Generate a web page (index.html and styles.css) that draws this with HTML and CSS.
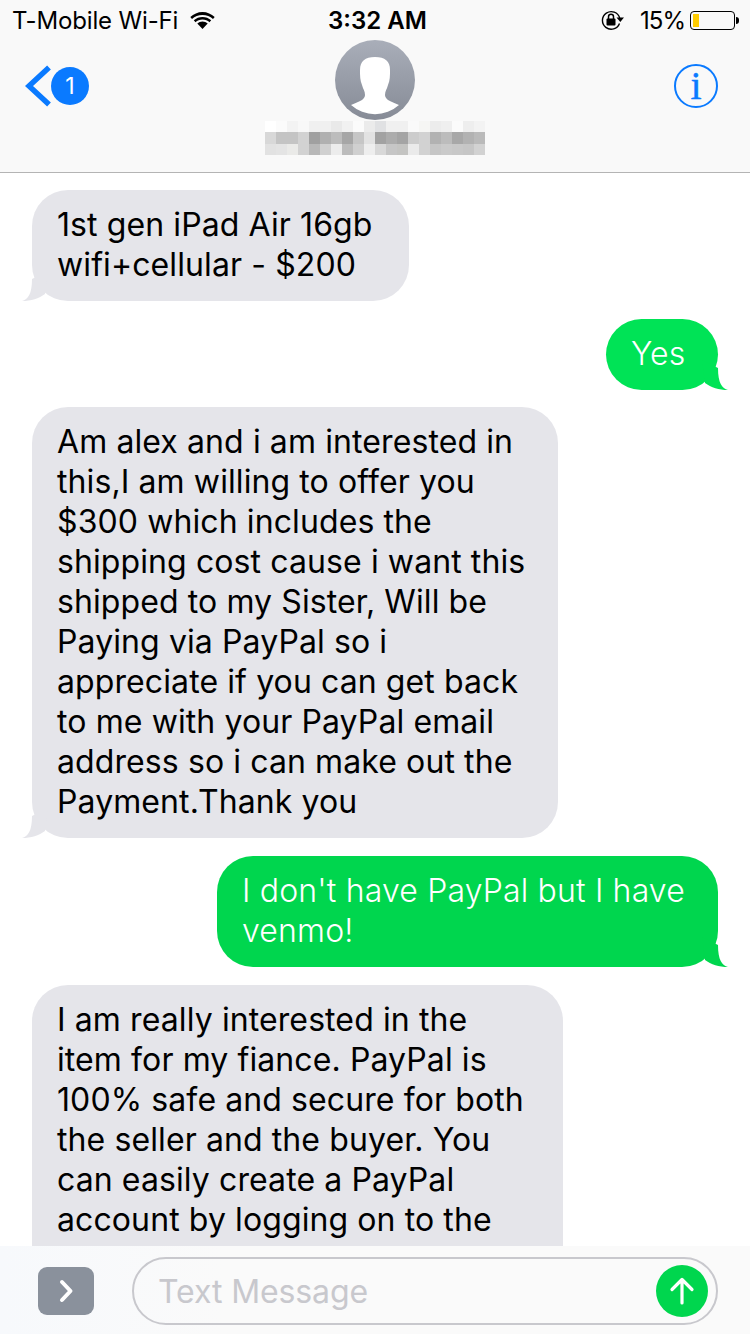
FILE: index.html
```html
<!DOCTYPE html>
<html lang="en">
<head>
  <meta charset="UTF-8">
  <meta name="viewport" content="width=device-width, initial-scale=1.0">
  <title>Messages</title>
  <link rel="stylesheet" href="styles.css">
</head>
<body>
  <div class="phone">
    <header class="top-bar">
      <div class="status-bar">
        <div class="status-left">
          <span class="carrier">T-Mobile Wi-Fi</span>
          <svg class="wifi" width="25" height="18" viewBox="0 0 25 18">
            <path d="M12.500 4C8.400 4 4.800 5.500 2 8L0.300 6C3.600 3 7.800 1 12.500 1S21.400 3 24.700 6L23 8C20.200 5.500 16.600 4 12.500 4Z"/>
            <path d="M12.500 8.500C9.800 8.500 7.400 9.500 5.500 11.200L3.800 9.300C6.200 7.200 9.200 6 12.500 6S18.800 7.200 21.200 9.300L19.500 11.200C17.600 9.500 15.200 8.500 12.500 8.500Z"/>
            <path d="M12.500 10.500C14.500 10.500 16.300 11.300 17.700 12.500L12.500 18L7.300 12.500C8.700 11.300 10.500 10.500 12.500 10.500Z"/>
          </svg>
        </div>
        <div class="status-time">3:32 AM</div>
        <div class="status-right">
          <svg class="lock" width="24" height="20" viewBox="0 0 24 20">
            <path d="M18.500 13.500A8.800 8.800 0 1 1 18.700 8" fill="none" stroke="#000" stroke-width="1.400"/>
            <path d="M15.500 7.500H23L19.300 12Z"/>
            <rect x="5.500" y="8.500" width="9" height="7" rx="1"/>
            <path d="M7.500 9V6.800a2.500 2.500 0 0 1 5 0V9" fill="none" stroke="#000" stroke-width="1.500"/>
          </svg>
          <span class="percent">15%</span>
          <div class="battery">
            <div class="battery-shell"><div class="battery-level"></div></div>
            <div class="battery-nub"></div>
          </div>
        </div>
      </div>
      <nav class="nav-bar">
        <div class="nav-back">
          <svg width="26" height="42" viewBox="0 0 26 42">
            <path d="M24 2.500L4 21L24 39.500" fill="none" stroke="#0a7aff" stroke-width="5.500"/>
          </svg>
          <span class="badge">1</span>
        </div>
        <div class="contact">
          <div class="avatar">
            <svg width="80" height="80" viewBox="0 0 80 80">
              <path d="M40 17C30 17 25 21 25 30C25 36 25 40 27 45C28 49 30 51 30 55C30 57 29 58 27 60C24 62 20 63 16 65A36 36 0 0 0 64 65C60 63 56 62 53 60C51 58 50 57 50 55C50 51 52 49 53 45C55 40 55 36 55 30C55 21 50 17 40 17Z" fill="#fff"/>
            </svg>
          </div>
          <svg class="name-blur" width="220" height="34" viewBox="0 0 20 3" preserveAspectRatio="none" shape-rendering="crispEdges">
            <g>
              <rect x="0" y="0" width="1" height="1" fill="#ffffff"/><rect x="1" y="0" width="1" height="1" fill="#fbfbfb"/><rect x="2" y="0" width="1" height="1" fill="#f3f3f3"/><rect x="3" y="0" width="1" height="1" fill="#f8f8f8"/><rect x="4" y="0" width="1" height="1" fill="#f0f0f0"/><rect x="5" y="0" width="1" height="1" fill="#f0f0f0"/><rect x="6" y="0" width="1" height="1" fill="#e9e9e9"/><rect x="7" y="0" width="1" height="1" fill="#f1f1f1"/><rect x="8" y="0" width="1" height="1" fill="#fbfbfb"/><rect x="9" y="0" width="1" height="1" fill="#ebebeb"/><rect x="10" y="0" width="1" height="1" fill="#e0e1e3"/><rect x="11" y="0" width="1" height="1" fill="#f0f0f0"/><rect x="12" y="0" width="1" height="1" fill="#f0f0f0"/><rect x="13" y="0" width="1" height="1" fill="#fafafa"/><rect x="14" y="0" width="1" height="1" fill="#f6f6f4"/><rect x="15" y="0" width="1" height="1" fill="#ececec"/><rect x="16" y="0" width="1" height="1" fill="#efefef"/><rect x="17" y="0" width="1" height="1" fill="#fbfbfb"/><rect x="18" y="0" width="1" height="1" fill="#eeeeee"/><rect x="19" y="0" width="1" height="1" fill="#f3f3f3"/>
            </g>
            <g>
              <rect x="0" y="1" width="1" height="1" fill="#d8d8d8"/><rect x="1" y="1" width="1" height="1" fill="#c4c4c4"/><rect x="2" y="1" width="1" height="1" fill="#c4c4c4"/><rect x="3" y="1" width="1" height="1" fill="#d2d2d2"/><rect x="4" y="1" width="1" height="1" fill="#a0a0a0"/><rect x="5" y="1" width="1" height="1" fill="#b0b0b0"/><rect x="6" y="1" width="1" height="1" fill="#bcbcbc"/><rect x="7" y="1" width="1" height="1" fill="#a6a6a6"/><rect x="8" y="1" width="1" height="1" fill="#c6c6c6"/><rect x="9" y="1" width="1" height="1" fill="#e2e2e2"/><rect x="10" y="1" width="1" height="1" fill="#a2a2a2"/><rect x="11" y="1" width="1" height="1" fill="#acacac"/><rect x="12" y="1" width="1" height="1" fill="#a4a4a4"/><rect x="13" y="1" width="1" height="1" fill="#cccccc"/><rect x="14" y="1" width="1" height="1" fill="#d2d2d2"/><rect x="15" y="1" width="1" height="1" fill="#b2b2b2"/><rect x="16" y="1" width="1" height="1" fill="#bcbcbc"/><rect x="17" y="1" width="1" height="1" fill="#a8a8a8"/><rect x="18" y="1" width="1" height="1" fill="#b2b2b2"/><rect x="19" y="1" width="1" height="1" fill="#bababa"/>
            </g>
            <g>
              <rect x="0" y="2" width="1" height="1" fill="#e2e2e2"/><rect x="1" y="2" width="1" height="1" fill="#e4e4e4"/><rect x="2" y="2" width="1" height="1" fill="#eaeae8"/><rect x="3" y="2" width="1" height="1" fill="#d2d2d2"/><rect x="4" y="2" width="1" height="1" fill="#b8b8b8"/><rect x="5" y="2" width="1" height="1" fill="#d0d0d0"/><rect x="6" y="2" width="1" height="1" fill="#ececec"/><rect x="7" y="2" width="1" height="1" fill="#bcbcbc"/><rect x="8" y="2" width="1" height="1" fill="#d0d0d0"/><rect x="9" y="2" width="1" height="1" fill="#eeeeee"/><rect x="10" y="2" width="1" height="1" fill="#d8d8d8"/><rect x="11" y="2" width="1" height="1" fill="#c6c6c6"/><rect x="12" y="2" width="1" height="1" fill="#c4c4c2"/><rect x="13" y="2" width="1" height="1" fill="#eaeaea"/><rect x="14" y="2" width="1" height="1" fill="#d2d2d2"/><rect x="15" y="2" width="1" height="1" fill="#c6c6c6"/><rect x="16" y="2" width="1" height="1" fill="#cacaca"/><rect x="17" y="2" width="1" height="1" fill="#c8c8c8"/><rect x="18" y="2" width="1" height="1" fill="#c6c6c6"/><rect x="19" y="2" width="1" height="1" fill="#d2d2d2"/>
            </g>
          </svg>
        </div>
        <div class="nav-info"><span class="info-i">i</span></div>
      </nav>
    </header>

    <main class="thread">
      <div class="bubble in msg-ipad">
        1st gen iPad Air 16gb<br>wifi+cellular - $200
        <svg class="tail" width="30" height="30" viewBox="0 0 30 30"><path d="M0 30C6 28.500 10 23 10 8L26 0L23 23C17 27.500 9 30 0 30Z"/></svg>
      </div>
      <div class="bubble out bright msg-yes">
        Yes
        <svg class="tail" width="30" height="30" viewBox="0 0 30 30"><path d="M0 30C6 28.500 10 23 10 8L26 0L23 23C17 27.500 9 30 0 30Z"/></svg>
      </div>
      <div class="bubble in msg-offer">
        Am alex and i am interested in<br>this,I am willing to offer you<br>$300 which includes the<br>shipping cost cause i want this<br>shipped to my Sister, Will be<br>Paying via PayPal so i<br>appreciate if you can get back<br>to me with your PayPal email<br>address so i can make out the<br>Payment.Thank you
        <svg class="tail" width="30" height="30" viewBox="0 0 30 30"><path d="M0 30C6 28.500 10 23 10 8L26 0L23 23C17 27.500 9 30 0 30Z"/></svg>
      </div>
      <div class="bubble out msg-venmo">
        I don't have PayPal but I have<br>venmo!
        <svg class="tail" width="30" height="30" viewBox="0 0 30 30"><path d="M0 30C6 28.500 10 23 10 8L26 0L23 23C17 27.500 9 30 0 30Z"/></svg>
      </div>
      <div class="bubble in msg-fiance">
        I am really interested in the<br>item for my fiance. PayPal is<br>100% safe and secure for both<br>the seller and the buyer. You<br>can easily create a PayPal<br>account by logging on to the
      </div>
    </main>

    <footer class="composer">
      <div class="expand">
        <svg width="16" height="24" viewBox="0 0 16 24"><path d="M4 3L12.500 12L4 21" fill="none" stroke="#fff" stroke-width="4" stroke-linecap="round" stroke-linejoin="round"/></svg>
      </div>
      <div class="input">
        <span class="placeholder">Text Message</span>
        <div class="send">
          <svg width="30" height="30" viewBox="0 0 30 30"><path d="M15 27V4M5 13.500L15 3.500L25 13.500" fill="none" stroke="#fff" stroke-width="3.200" stroke-linecap="round" stroke-linejoin="round"/></svg>
        </div>
      </div>
    </footer>
  </div>
</body>
</html>
```

FILE: styles.css
```css
html, body {
  margin: 0;
  overflow: hidden;
}
body {
  background-color: #fff;
  color: #000;
  font-family: Inter, "Liberation Sans", sans-serif;
}
.phone {
  width: 750px;
  height: 1334px;
  display: flex;
  flex-direction: column;
  overflow: hidden;
}

/* top */
.top-bar {
  background-color: #f9f9f9;
  border-bottom: 1px solid #b4b4b4;
  flex: none;
  height: 172px;
}
.status-bar {
  height: 40px;
  display: grid;
  grid-template-columns: 1fr auto 1fr;
  align-items: center;
  padding: 0 11px 0 12px;
  font-size: 24px;
}
.status-left {
  display: flex;
  align-items: center;
  gap: 12px;
}
.carrier {
  letter-spacing: -0.15px;
}
.status-time {
  font-weight: 600;
  transform: translateX(2px);
}
.status-right {
  display: flex;
  align-items: center;
  justify-content: flex-end;
}
.lock {
  margin-right: 15px;
}
.percent {
  margin-right: 5px;
  letter-spacing: -1px;
}
.battery {
  display: flex;
  align-items: center;
}
.battery-shell {
  width: 45px;
  height: 19px;
  box-sizing: border-box;
  border: 1.5px solid #000;
  border-radius: 4px;
  padding: 2px;
}
.battery-level {
  width: 6px;
  height: 100%;
  background-color: #ffcc00;
}
.battery-nub {
  width: 3px;
  height: 7px;
  background-color: #000;
  border-radius: 0 3px 3px 0;
  margin-left: 1px;
}

.nav-bar {
  display: grid;
  grid-template-columns: 1fr auto 1fr;
  padding: 0 25px;
}
.nav-back {
  display: flex;
  align-items: center;
  align-self: start;
  margin-top: 25px;
}
.badge {
  width: 38px;
  height: 38px;
  border-radius: 50%;
  background-color: #0a7aff;
  color: #fff;
  font-size: 23px;
  display: flex;
  align-items: center;
  justify-content: center;
}
.contact {
  display: flex;
  flex-direction: column;
  align-items: center;
}
.avatar {
  width: 80px;
  height: 80px;
  border-radius: 50%;
  overflow: hidden;
  background: linear-gradient(to bottom, #a9aeb9, #868b96);
}
.avatar svg {
  display: block;
}
.name-blur {
  display: block;
  margin-top: 1px;
}
.nav-info {
  justify-self: end;
  align-self: start;
  margin: 24px 7px 0 0;
  width: 44px;
  height: 44px;
  box-sizing: border-box;
  border: 2px solid #0a7aff;
  border-radius: 50%;
  display: flex;
  align-items: center;
  justify-content: center;
}
.info-i {
  font-family: "Liberation Serif", serif;
  font-size: 40px;
  line-height: 1;
  color: #0a7aff;
  -webkit-text-stroke: 0.4px #0a7aff;
}

/* messages */
.thread {
  flex: 1;
  min-height: 0;
  display: flex;
  flex-direction: column;
  align-items: flex-start;
  gap: 18.4px;
  padding: 17px 32px 0;
  overflow: hidden;
}
.bubble {
  position: relative;
  flex: none;
  box-sizing: border-box;
  font-size: 32px;
  line-height: 40px;
  padding: 15px 25px 15.6px;
  border-radius: 36px;
}
.bubble.in {
  background-color: #e5e5ea;
  fill: #e5e5ea;
  letter-spacing: 0.1px;
}
.bubble.out {
  align-self: flex-end;
  background-color: #00d64e;
  fill: #00d64e;
  color: #fff;
  font-weight: 300;
  letter-spacing: 0.17px;
}
.bubble.out.bright {
  background-color: #00e356;
  fill: #00e356;
}
.msg-ipad { width: 377px; }
.msg-yes { width: 112px; }
.msg-offer { width: 526px; margin-top: -1px; }
.msg-venmo { width: 501px; }
/* runs on under the composer */
.msg-fiance { width: 531px; padding-bottom: 60px; }

.tail {
  position: absolute;
  left: -10px;
  bottom: 0;
}
.out .tail {
  left: auto;
  right: -10px;
  transform: scaleX(-1);
}

/* bottom */
.composer {
  flex: none;
  height: 88px;
  box-sizing: border-box;
  background: linear-gradient(to right, #f7f9fc, #fafafa 30%);
  display: flex;
  align-items: center;
  padding: 2px 32px 0 38px;
}
.expand {
  width: 56px;
  height: 48px;
  border-radius: 9px;
  background-color: #8a919c;
  display: flex;
  align-items: center;
  justify-content: center;
  margin-right: 38px;
}
.input {
  flex: 1;
  height: 68px;
  box-sizing: border-box;
  border: 2px solid #c8c8cd;
  border-radius: 34px;
  display: flex;
  align-items: center;
  justify-content: space-between;
  padding: 0 8px 0 24px;
}
.placeholder {
  font-size: 32px;
  color: #c8c8cd;
  letter-spacing: -0.1px;
}
.send {
  width: 52px;
  height: 52px;
  border-radius: 50%;
  background-color: #00d64e;
  display: flex;
  align-items: center;
  justify-content: center;
}
```
